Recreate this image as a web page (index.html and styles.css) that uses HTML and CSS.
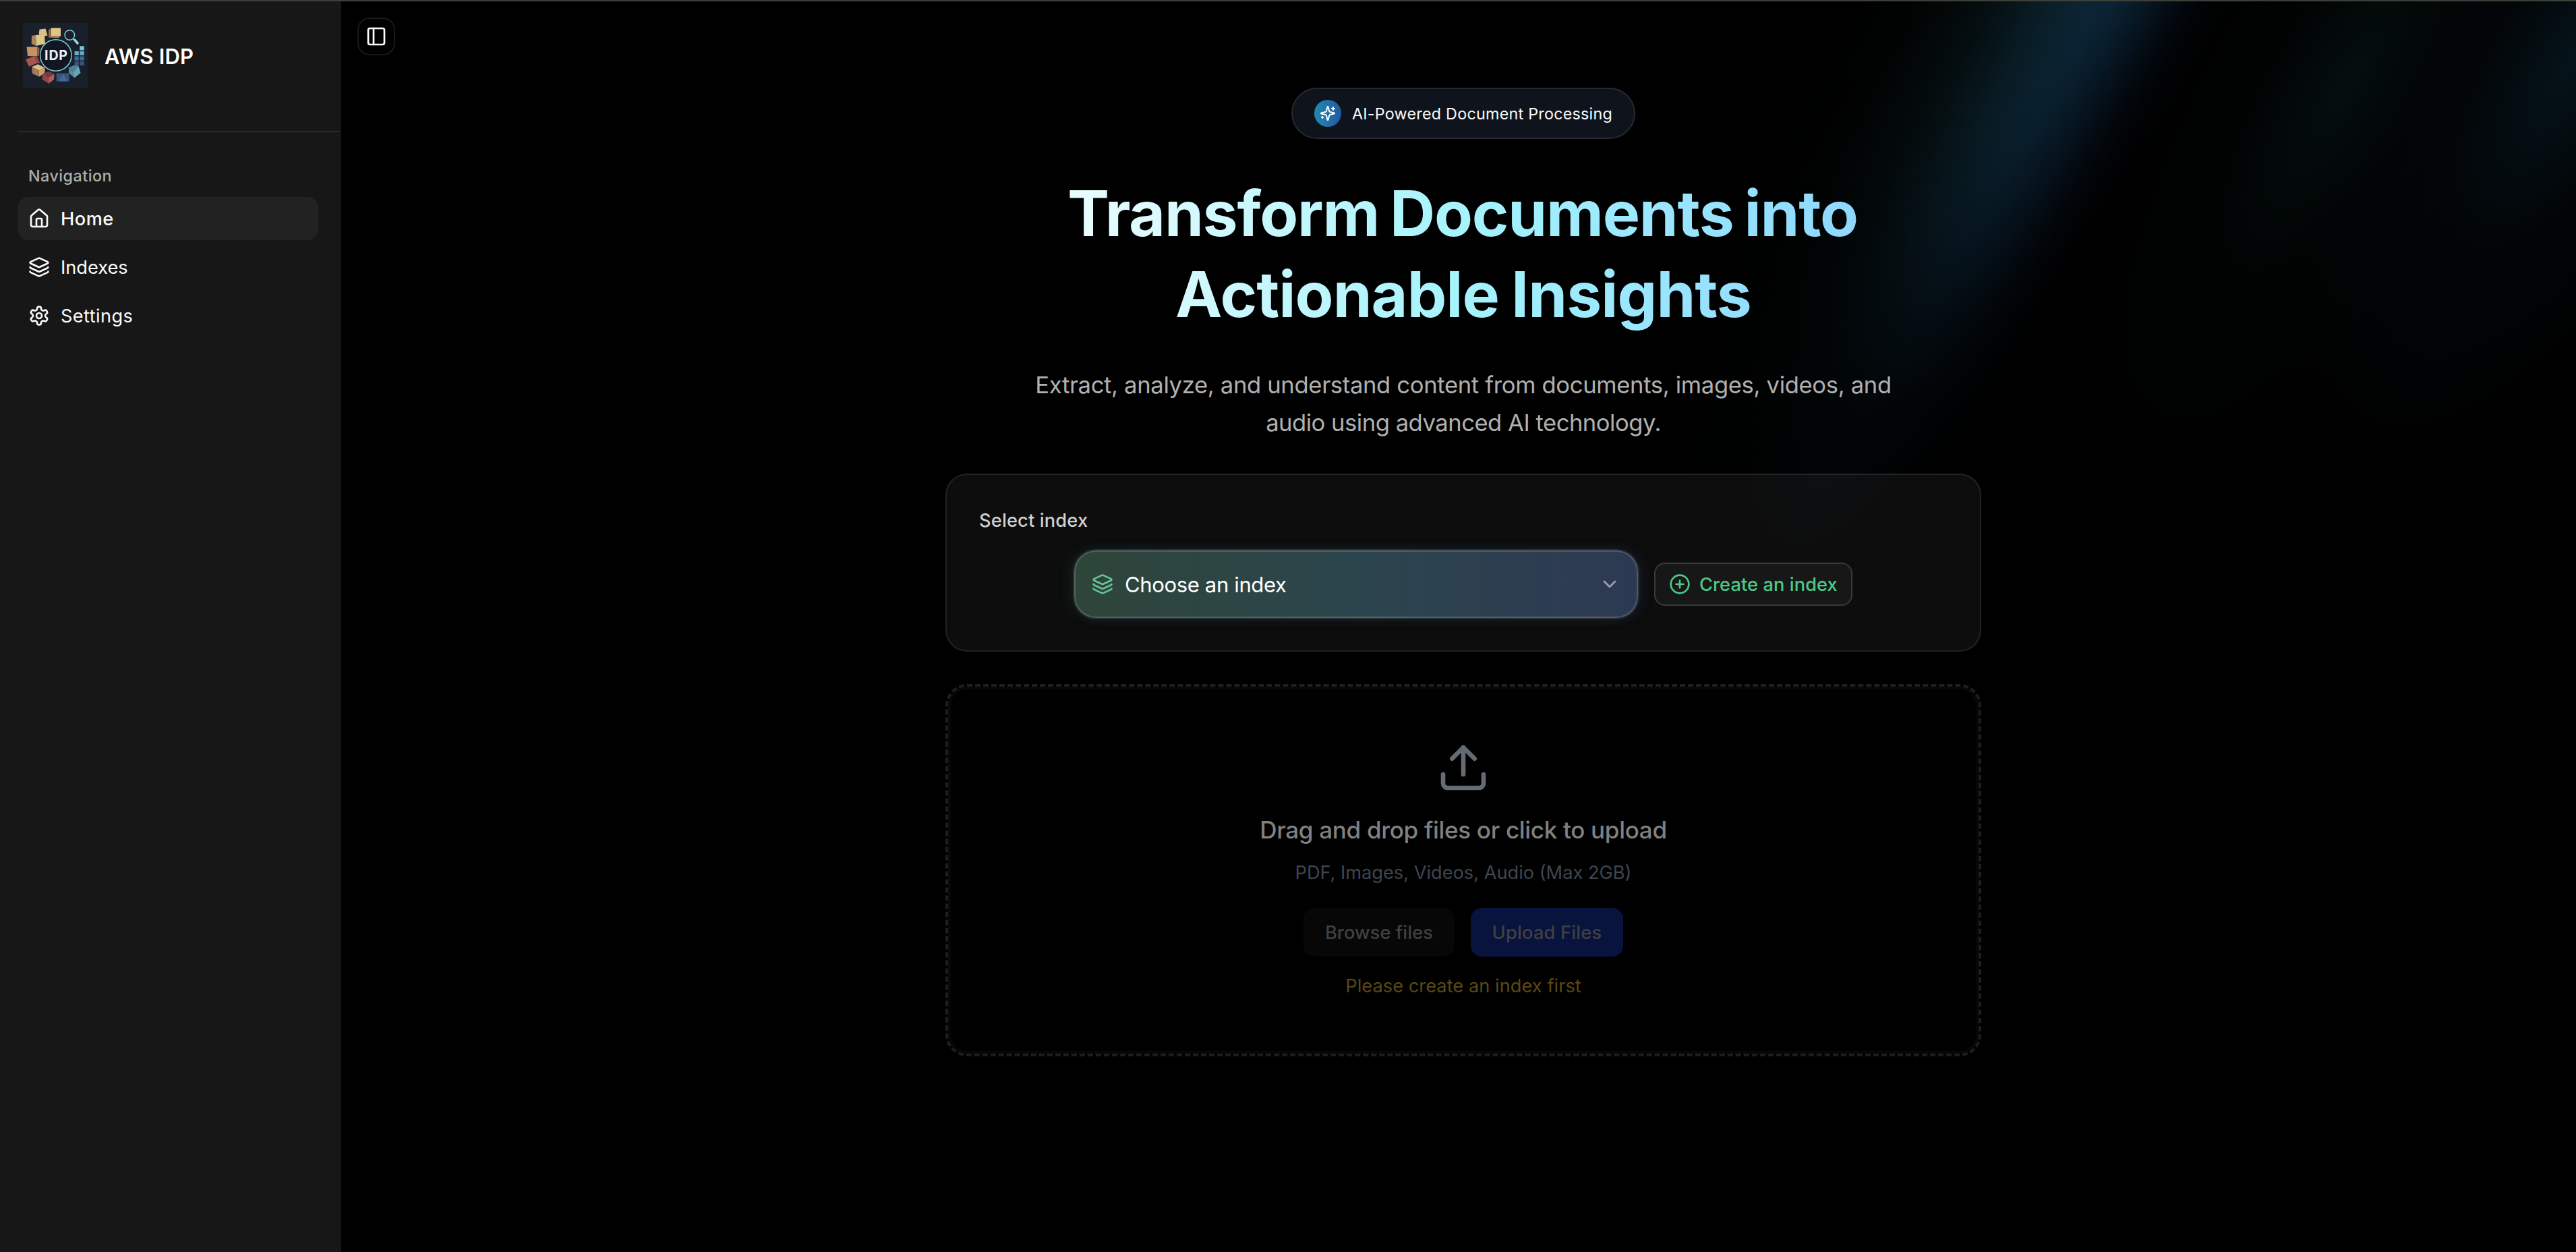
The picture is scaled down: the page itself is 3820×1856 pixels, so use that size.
FILE: index.html
```
<!DOCTYPE html>
<html lang="en">
<head>
<meta charset="utf-8">
<title>AWS IDP</title>
<link rel="stylesheet" href="styles.css">
</head>
<body>
<svg width="0" height="0" class="sprite" aria-hidden="true">
  <symbol id="layers" viewBox="0 0 24 24">
    <path d="M12.83 2.18a2 2 0 0 0-1.66 0L2.6 6.08a1 1 0 0 0 0 1.83l8.58 3.91a2 2 0 0 0 1.66 0l8.58-3.9a1 1 0 0 0 0-1.83z"/>
    <path d="M2 12a1 1 0 0 0 .58.91l8.6 3.91a2 2 0 0 0 1.65 0l8.58-3.9A1 1 0 0 0 22 12"/>
    <path d="M2 17a1 1 0 0 0 .58.91l8.6 3.91a2 2 0 0 0 1.65 0l8.58-3.9A1 1 0 0 0 22 17"/>
  </symbol>
</svg>
<div class="shell">
  <aside class="sidebar">
    <header class="brand">
      <svg class="logo" viewBox="0 0 96 96">
        <rect width="96" height="96" fill="#1a202b"/>
        <path d="M24.500 9.500l9-1 3 10-8 2-5-2z" fill="#d9c183"/>
        <path d="M23.500 17l5 1 0 3-5-2z" fill="#a5794f"/>
        <path d="M42 7.500h14v12H42z" fill="#dcc787"/>
        <path d="M42 7.500l-4 3v11l4-2z" fill="#9a6a4c"/><path d="M38 21.500l4-2h14l-3 2.500z" fill="#b4875c"/>
        <path d="M19 18l13-.5.8 13.500-13.300 3z" fill="#dcc688"/><path d="M19 18l-6 1-.3 12 6.800 3z" fill="#a98660"/>
        <path d="M5.500 35.500h16v14l-14.500-.5z" fill="#c59262"/><path d="M21.500 35.500l3 2-.5 10-2.500 2z" fill="#8d6248"/>
        <path d="M4 54l13-4.700 4.500 10-12.500 5.400z" fill="#a9544f"/><path d="M17 49.300l8.300 10.200-3.800-.2z" fill="#77393b"/><path d="M17 49.300l5 1.700 3.300 8.500-4 .2z" fill="#8c4645"/>
        <path d="M13.300 65l9-3.700 10.400 5.200-9 4z" fill="#dfbd80"/><path d="M13.300 65l10.400 5.500v9.300l-10-5z" fill="#a17c5a"/><path d="M23.700 70.500l9-4-.5 8-8.500 5.300z" fill="#cba26e"/>
        <path d="M29.500 75l9-3 8.200 3.700-8.500 5z" fill="#7b3a3c"/><path d="M29.500 75l8.700 5.700v9l-9.900-6z" fill="#8f4747"/><path d="M38.200 80.700l8.500-5-.7 8-7.800 6z" fill="#b0605a"/>
        <path d="M49.700 74.500h19v12h-19z" fill="#35547a"/><path d="M59.500 75.500l7 11H53z" fill="#436890"/>
        <path d="M68 66l10-4 4.500 2-8 9z" fill="#4b8495"/><path d="M82.500 64l3 10-9 7.500-2-8.500z" fill="#66a5b4"/><path d="M67.700 66l6.800 7 2 8.500-8-7z" fill="#5590a2"/>
        <path d="M84.300 34.300h6.400v6.200h-6.400z" fill="#79c9d2"/>
        <path d="M76.500 42h6.300v6h-6.300zM84.300 42h6.400v6h-6.400z" fill="#5fadc0"/>
        <path d="M76.500 49.500h6.300v6h-6.300zM84.300 49.500h6.400v6h-6.400z" fill="#3f6b95"/>
        <path d="M76.500 57h6.300v6h-6.300zM84.300 57h6.400v6h-6.400z" fill="#375781"/>
        <circle cx="48.800" cy="48" r="23.200" fill="#111622" stroke="#7ccbd2" stroke-width="1.500"/>
        <circle cx="69.300" cy="18" r="7.300" fill="none" stroke="#7fd3da" stroke-width="1.400"/>
        <path d="M74.500 23.500l2.500 2.500" stroke="#7fd3da" stroke-width="1.800"/><path d="M77 25.500l4 4.500" stroke="#8bdde2" stroke-width="3.600" stroke-linecap="round"/>
        <text x="49" y="54.500" text-anchor="middle" textLength="34" class="logo-text">IDP</text>
      </svg>
      <span class="brand-name">AWS IDP</span>
    </header>
    <div class="divider"></div>
    <div class="nav-label">Navigation</div>
    <nav class="nav">
      <a class="nav-item active">
        <svg class="icon" viewBox="0 0 24 24"><path d="M15 21v-8a1 1 0 0 0-1-1h-4a1 1 0 0 0-1 1v8"/><path d="M3 10a2 2 0 0 1 .709-1.528l7-5.999a2 2 0 0 1 2.582 0l7 5.999A2 2 0 0 1 21 10v9a2 2 0 0 1-2 2H5a2 2 0 0 1-2-2z"/></svg>
        <span class="t-home">Home</span>
      </a>
      <a class="nav-item">
        <svg class="icon"><use href="#layers"/></svg>
        <span class="t-indexes">Indexes</span>
      </a>
      <a class="nav-item">
        <svg class="icon" viewBox="0 0 24 24"><path d="M12.220 2h-.44a2 2 0 0 0-2 2v.18a2 2 0 0 1-1 1.730l-.43.25a2 2 0 0 1-2 0l-.15-.08a2 2 0 0 0-2.730.73l-.22.38a2 2 0 0 0 .73 2.730l.15.1a2 2 0 0 1 1 1.720v.51a2 2 0 0 1-1 1.740l-.15.09a2 2 0 0 0-.73 2.730l.22.38a2 2 0 0 0 2.730.73l.15-.08a2 2 0 0 1 2 0l.43.25a2 2 0 0 1 1 1.730V20a2 2 0 0 0 2 2h.44a2 2 0 0 0 2-2v-.18a2 2 0 0 1 1-1.730l.43-.25a2 2 0 0 1 2 0l.15.08a2 2 0 0 0 2.730-.73l.22-.39a2 2 0 0 0-.73-2.730l-.15-.08a2 2 0 0 1-1-1.740v-.5a2 2 0 0 1 1-1.740l.15-.09a2 2 0 0 0 .73-2.730l-.22-.38a2 2 0 0 0-2.730-.73l-.15.08a2 2 0 0 1-2 0l-.43-.25a2 2 0 0 1-1-1.730V4a2 2 0 0 0-2-2z"/><circle cx="12" cy="12" r="3"/></svg>
        <span class="t-settings">Settings</span>
      </a>
    </nav>
  </aside>

  <main class="main">
    <div class="aurora" aria-hidden="true">
      <div class="beam beam-main"></div>
      <div class="beam beam-green"></div>
      <div class="beam beam-edge"></div>
    </div>
    <div class="toolbar">
      <button class="toggle" aria-label="Toggle sidebar">
        <svg class="icon" viewBox="0 0 24 24"><rect x="3" y="3" width="18" height="18" rx="2"/><path d="M9 3v18"/></svg>
      </button>
    </div>
    <div class="content">
      <div class="badge">
        <span class="badge-dot">
          <svg class="icon" viewBox="0 0 24 24"><path d="M9.937 15.500A2 2 0 0 0 8.500 14.063l-6.135-1.582a.5.5 0 0 1 0-.962L8.500 9.936A2 2 0 0 0 9.937 8.500l1.582-6.135a.5.5 0 0 1 .963 0L14.063 8.500A2 2 0 0 0 15.500 9.937l6.135 1.581a.5.5 0 0 1 0 .964L15.500 14.063a2 2 0 0 0-1.437 1.437l-1.582 6.135a.5.5 0 0 1-.963 0z"/><path d="M20 3v4M22 5h-4M4 17v2M5 18H3"/></svg>
        </span>
        <span class="badge-text">AI-Powered Document Processing</span>
      </div>
      <h1 class="title"><span class="title-a">Transform Documents into</span><span class="title-b">Actionable Insights</span></h1>
      <p class="subtitle"><span class="sub-a">Extract, analyze, and understand content from documents, images, videos, and</span><span class="sub-b">audio using advanced AI technology.</span></p>

      <section class="card">
        <div class="card-label">Select index</div>
        <div class="card-row">
          <div class="select">
            <svg class="icon select-icon"><use href="#layers"/></svg>
            <span class="select-text">Choose an index</span>
            <svg class="icon chevron" viewBox="0 0 24 24"><path d="m6 9 6 6 6-6"/></svg>
          </div>
          <button class="create">
            <svg class="icon" viewBox="0 0 24 24"><circle cx="12" cy="12" r="10"/><path d="M8 12h8M12 8v8"/></svg>
            <span>Create an index</span>
          </button>
        </div>
      </section>

      <section class="dropzone">
        <svg class="icon upload-icon" viewBox="0 0 24 24"><path d="M21 15v4a2 2 0 0 1-2 2H5a2 2 0 0 1-2-2v-4"/><path d="m17 8-5-5-5 5"/><path d="M12 3v12"/></svg>
        <div class="drop-title">Drag and drop files or click to upload</div>
        <div class="drop-hint">PDF, Images, Videos, Audio (Max 2GB)</div>
        <div class="drop-actions">
          <button class="btn browse">Browse files</button>
          <button class="btn upload">Upload Files</button>
        </div>
        <div class="drop-warning">Please create an index first</div>
      </section>
    </div>
  </main>
</div>
</body>
</html>
```
FILE: styles.css
```
* { box-sizing: border-box; }

body {
  margin: 0;
  background: #000;
  color: #fafafa;
  font-family: Inter, "Liberation Sans", sans-serif;
  font-size: 27.2px;
}

button { font: inherit; color: inherit; padding: 0; background: none; border: 0; }

.sprite { display: block; height: 0; }

.icon {
  width: 32px;
  height: 32px;
  flex: none;
  fill: none;
  stroke: currentColor;
  stroke-width: 2;
  stroke-linecap: round;
  stroke-linejoin: round;
}

.shell {
  display: flex;
  height: 1856px;
  border-top: 2px solid #3d4039;
  overflow: hidden;
}

/* Sidebar */
.sidebar { width: 506px; flex: none; background: #171717; }

.brand { display: flex; align-items: center; gap: 25px; padding: 32px 0 0 34px; }
.logo { width: 96px; height: 96px; }
.logo-text { font-size: 19.500px; font-weight: 700; fill: #eef1f6; }
.brand-name { font-size: 31px; font-weight: 600; letter-spacing: .18px; padding-top: 2px; color: #fff; }

.divider { height: 2px; width: 478px; margin: 64px 0 0 26px; background: #2b2b2b; }

.nav-label {
  height: 56px;
  line-height: 56px;
  margin: 37px 0 3px;
  padding-left: 42px;
  font-size: 23.300px;
  font-weight: 500;
  letter-spacing: .47px;
  color: #adadad;
}

.nav { display: flex; flex-direction: column; gap: 8px; padding: 0 34px 0 26px; }
.nav-item {
  display: flex;
  align-items: center;
  gap: 16px;
  height: 64px;
  padding: 0 16px;
  border-radius: 16px;
  color: #fafafa;
}
.nav-item.active { background: #222; font-weight: 500; }
.t-home { letter-spacing: .5px; }
.t-indexes { letter-spacing: 0; }
.t-settings { letter-spacing: .39px; }

/* Main area */
.main { position: relative; flex: 1; min-width: 0; overflow: hidden; background: #000; }
.aurora { position: absolute; inset: 0; }
.beam { position: absolute; transform: rotate(30deg); }
.beam-main {
  left: 2305px;
  top: -200px;
  width: 490px;
  height: 1400px;
  transform-origin: 303px 200px;
  filter: blur(14px);
  background: linear-gradient(90deg, transparent, rgba(5, 14, 14, .25) 15%, rgba(8, 25, 29, .62) 34%, rgba(11, 34, 45, .95) 50%, #0b2637 62%, rgba(9, 29, 45, .9) 72%, rgba(5, 15, 26, .55) 83%, rgba(2, 5, 10, .25) 91%, transparent);
  -webkit-mask-image: linear-gradient(#000 200px, rgba(0, 0, 0, .82) 433px, rgba(0, 0, 0, .6) 588px, rgba(0, 0, 0, .4) 705px, rgba(0, 0, 0, .18) 860px, rgba(0, 0, 0, .08) 1005px, transparent 1250px);
  mask-image: linear-gradient(#000 200px, rgba(0, 0, 0, .82) 433px, rgba(0, 0, 0, .6) 588px, rgba(0, 0, 0, .4) 705px, rgba(0, 0, 0, .18) 860px, rgba(0, 0, 0, .08) 1005px, transparent 1250px);
}
.beam-green {
  left: 2804px;
  top: -560px;
  width: 480px;
  height: 1400px;
  transform-origin: 240px 560px;
  background: radial-gradient(closest-side, #040f0d, rgba(3, 8, 9, .4) 45%, transparent);
}
.beam-edge {
  left: 3090px;
  top: -600px;
  width: 540px;
  height: 1400px;
  transform-origin: 270px 600px;
  background: radial-gradient(closest-side, #05131a, rgba(4, 10, 14, .5) 45%, transparent);
}

.toolbar { position: relative; display: flex; padding: 24px 24px 0; }
.toggle {
  display: flex;
  align-items: center;
  justify-content: center;
  width: 56px;
  height: 56px;
  border: 2px solid #191919;
  border-radius: 18px;
  color: #fff;
}

.content {
  position: relative;
  display: flex;
  flex-direction: column;
  align-items: center;
  padding: 48px 0 0 14px;
}

.badge {
  display: flex;
  align-items: center;
  gap: 16px;
  height: 76px;
  width: 510px;
  padding-left: 32px;
  border: 2px solid #262932;
  border-radius: 38px;
  background: #0f131b;
}
.badge-dot {
  display: flex;
  align-items: center;
  justify-content: center;
  width: 40px;
  height: 40px;
  border-radius: 50%;
  background: linear-gradient(90deg, #2588ae, #1d5ba2);
  color: #fff;
}
.badge-dot .icon { width: 24px; height: 24px; }
.badge-text { font-size: 23.300px; font-weight: 400; letter-spacing: .25px; white-space: nowrap; }

.title {
  width: 1536px;
  margin: 50px 0 0;
  font-size: 93px;
  line-height: 120px;
  font-weight: 700;
  text-align: center;
  color: transparent;
  background: linear-gradient(100deg, #fff 0%, #a5f3fc 50%, #86ceff 100%);
  -webkit-background-clip: text;
  background-clip: text;
}
.title span, .subtitle span { display: block; white-space: nowrap; }
.title-a { letter-spacing: -1.200px; word-spacing: -5px; padding-right: 2px; }
.title-b { letter-spacing: -.95px; word-spacing: -3px; }

.subtitle { margin: 46px 0 0; font-size: 34.600px; line-height: 56px; text-align: center; color: #b0b0b0; }
.sub-a { letter-spacing: -.33px; }
.sub-b { letter-spacing: -.48px; }

.card {
  width: 1536px;
  height: 264px;
  margin-top: 48px;
  padding: 48px;
  border: 2px solid rgba(255, 255, 255, .09);
  border-radius: 32px;
  background: rgba(255, 255, 255, .05);
}
.card-label { line-height: 40px; font-weight: 500; letter-spacing: .18px; color: #d0d0d0; }
.card-row { display: flex; justify-content: center; align-items: center; gap: 24px; margin-top: 24px; }

.select {
  display: flex;
  align-items: center;
  width: 836px;
  height: 100px;
  padding: 0 24px;
  border: 2px solid rgba(255, 255, 255, .16);
  border-radius: 32px;
  background: linear-gradient(90deg, #2e4539, #2c454d 50%, #2d3953) border-box;
  box-shadow: 0 0 0 2px rgba(255, 255, 255, .1), -6px 0 18px rgba(45, 90, 75, .22), 6px 0 18px rgba(50, 75, 130, .22);
}
.select-icon { color: #68c39a; }
.select-text { flex: 1; margin-left: 17px; font-size: 31px; letter-spacing: -.35px; color: #fff; }
.chevron { color: #989eae; }

.create {
  display: flex;
  align-items: center;
  gap: 13px;
  width: 294px;
  height: 64px;
  padding-left: 20px;
  border: 2px solid #393a3a;
  border-radius: 16px;
  background: rgba(255, 255, 255, .045);
  color: #4bc988;
  font-weight: 500;
  letter-spacing: .09px;
  white-space: nowrap;
}

.dropzone {
  display: flex;
  flex-direction: column;
  align-items: center;
  width: 1536px;
  height: 552px;
  margin-top: 48px;
  padding-top: 80px;
  border: 4px dashed #1e1e1e;
  border-radius: 32px;
  background: #000 padding-box;
  box-shadow: inset 0 0 0 4px #070707;
}
.upload-icon { width: 80px; height: 80px; color: #656b72; }
.drop-title { margin-top: 24px; font-size: 35px; line-height: 56px; font-weight: 500; letter-spacing: -.31px; color: #808080; }
.drop-hint { margin-top: 16px; line-height: 40px; color: #3e4650; }
.drop-actions { display: flex; gap: 24px; margin-top: 32px; }
.btn { height: 72px; border-radius: 16px; font-weight: 500; color: #404040; }
.browse { width: 224px; background: #070707; letter-spacing: .11px; }
.upload { width: 226px; background: #08143d; letter-spacing: .21px; }
.drop-warning { margin-top: 24px; line-height: 40px; letter-spacing: .05px; color: #5c4813; }
```
